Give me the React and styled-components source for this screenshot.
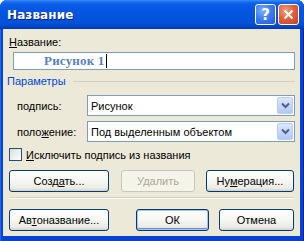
import React from 'react';
import styled, { createGlobalStyle } from 'styled-components';

const Global = createGlobalStyle`
  html, body { margin: 0; padding: 0; background: #fff; }
  body { font-family: "Liberation Sans", Arial, sans-serif; font-size: 11px; color: #000; }
`;

const Chevron = () => (
  <svg width="9" height="7" viewBox="0 0 9 7">
    <polyline points="1,1.5 4.5,5 8,1.5" fill="none" stroke="#4D6185" strokeWidth="2" />
  </svg>
);

const App = () => {
  return (
    <>
      <Global />
      <Window>
        <TitleBar>
          <Title>Название</Title>
          <TitleButtons>
            <CapButton $kind="help">?</CapButton>
            <CapButton $kind="close">
              <svg width="11" height="11" viewBox="0 0 11 11">
                <path d="M1.5 1.5 L9.5 9.5 M9.5 1.5 L1.5 9.5" stroke="#fff" strokeWidth="2" />
              </svg>
            </CapButton>
          </TitleButtons>
        </TitleBar>
        <Body>
          <Label><u>Н</u>азвание:</Label>
          <Input>
            <InputText>Рисунок 1</InputText>
            <Caret />
          </Input>

          <GroupHead>
            <GroupTitle>Параметры</GroupTitle>
            <GroupLine />
          </GroupHead>

          <FieldRow $top={8}>
            <FieldLabel>по<u>д</u>пись:</FieldLabel>
            <Combo>
              <ComboText>Рисунок</ComboText>
              <ComboButton><Chevron /></ComboButton>
            </Combo>
          </FieldRow>
          <FieldRow $top={5}>
            <FieldLabel>поло<u>ж</u>ение:</FieldLabel>
            <Combo>
              <ComboText>Под выделенным объектом</ComboText>
              <ComboButton><Chevron /></ComboButton>
            </Combo>
          </FieldRow>

          <CheckRow>
            <CheckBox />
            <span><u>И</u>сключить подпись из названия</span>
          </CheckRow>

          <ButtonRow $top={9}>
            <Button $w={100}>Созд<u>а</u>ть...</Button>
            <Button $w={74} $ml={12} disabled>Удалить</Button>
            <Button $w={88} $ml={11}>Ну<u>м</u>ерация...</Button>
          </ButtonRow>

          <Separator />

          <ButtonRow $top={10}>
            <Button $w={100}>Ав<u>т</u>оназвание...</Button>
            <Button $w={73} $ml={27} $default>ОК</Button>
            <Button $w={75} $ml={10}>Отмена</Button>
          </ButtonRow>
        </Body>
      </Window>
    </>
  );
};

export default App;

const Window = styled.div`
  width: 304px;
  height: 241px;
  box-sizing: border-box;
  background: #0842d4;
  border-radius: 7px 7px 0 0;
  display: flex;
  flex-direction: column;
  overflow: hidden;
  padding: 0 4px 5px 3px;
  box-shadow: inset 1px 0 0 #166aee, inset -1px 0 0 #001ea0;
`;

const TitleBar = styled.div`
  height: 29px;
  margin: 0 -4px 0 -3px;
  flex-shrink: 0;
  display: flex;
  align-items: center;
  justify-content: space-between;
  padding: 0 5px 0 7px;
  background: linear-gradient(
    to bottom,
    #3d8cf5 0px,
    #1a6df0 2px,
    #0a5ee6 4px,
    #0555e2 10px,
    #0453dc 18px,
    #0451d8 24px,
    #0343c4 27px,
    #0235b0 29px
  );
  border-radius: 7px 7px 0 0;
`;

const Title = styled.div`
  font-family: "DejaVu Sans", Verdana, sans-serif;
  font-weight: bold;
  font-size: 12px;
  color: #fff;
  text-shadow: 1px 1px 0 #0a1e80;
  letter-spacing: 0.1px;
`;

const TitleButtons = styled.div`
  display: flex;
  gap: 2px;
`;

const CapButton = styled.div`
  width: 21px;
  height: 21px;
  box-sizing: border-box;
  border: 1px solid #fff;
  border-radius: 3px;
  display: flex;
  align-items: center;
  justify-content: center;
  color: #fff;
  font-family: "DejaVu Sans", sans-serif;
  font-weight: bold;
  font-size: 15px;
  background: ${p =>
    p.$kind === 'close'
      ? 'radial-gradient(circle at 35% 30%, #f0a080 0%, #e2603c 45%, #c8401e 100%)'
      : 'radial-gradient(circle at 35% 30%, #7fb0ff 0%, #3d7ef2 45%, #2258d8 100%)'};
`;

const Body = styled.div`
  flex: 1;
  background: #ece9d8;
  padding: 0;
`;

const Label = styled.div`
  margin: 7px 0 0 6px;
  height: 13px;
  line-height: 13px;
`;

const Input = styled.div`
  margin: 3px 0 0 10px;
  width: 282px;
  height: 18px;
  box-sizing: border-box;
  border: 1px solid #7f9db9;
  background: #fff;
  display: flex;
  align-items: center;
  padding-left: 30px;
`;

const InputText = styled.span`
  font-family: "Liberation Serif", "Times New Roman", serif;
  font-weight: bold;
  font-size: 13px;
  color: #5b7fc4;
  letter-spacing: 0.2px;
`;

const Caret = styled.span`
  width: 1px;
  height: 14px;
  background: #000;
  margin-left: 1px;
`;

const GroupHead = styled.div`
  margin: 4px 0 0 4px;
  height: 13px;
  display: flex;
  align-items: center;
`;

const GroupTitle = styled.span`
  color: #0046d5;
  font-size: 11px;
`;

const GroupLine = styled.div`
  flex: 1;
  height: 1px;
  background: #d0d0bf;
  margin: 2px 5px 0 7px;
`;

const FieldRow = styled.div`
  margin: ${p => p.$top}px 0 0 14px;
  display: flex;
  align-items: center;
`;

const FieldLabel = styled.span`
  width: 70px;
`;

const Combo = styled.div`
  width: 208px;
  height: 21px;
  box-sizing: border-box;
  border: 1px solid #7f9db9;
  background: #fff;
  display: flex;
  align-items: center;
  padding: 1px;
`;

const ComboText = styled.span`
  flex: 1;
  padding-left: 2px;
`;

const ComboButton = styled.div`
  width: 16px;
  height: 17px;
  box-sizing: border-box;
  border: 1px solid #bccdf5;
  border-radius: 2px;
  background: linear-gradient(to bottom, #dce6fd, #c2d3fc 60%, #b3c8f6);
  display: flex;
  align-items: center;
  justify-content: center;
`;

const CheckRow = styled.div`
  margin: 6px 0 0 6px;
  display: flex;
  align-items: center;
  gap: 4px;
  height: 13px;
`;

const CheckBox = styled.div`
  width: 13px;
  height: 13px;
  box-sizing: border-box;
  border: 1px solid #1c5180;
  background: linear-gradient(135deg, #dcdcd7, #fff);
`;

const ButtonRow = styled.div`
  margin: ${p => p.$top}px 0 0 6px;
  display: flex;
`;

const Button = styled.button`
  width: ${p => p.$w}px;
  margin-left: ${p => p.$ml || 0}px;
  height: 22px;
  box-sizing: border-box;
  padding: 0;
  font: inherit;
  color: #000;
  border: 1px solid #003c74;
  border-radius: 3px;
  background: linear-gradient(to bottom, #fff 0%, #f6f6f2 50%, #ecebe6 85%, #d6d0c5 100%);
  box-shadow: ${p => (p.$default ? 'inset 0 0 0 1px #a7c1f0, inset 0 -1px 0 1px #6a8fdc' : 'none')};

  &:disabled {
    color: #aca899;
    border-color: #c9c7ba;
    background: #f5f4ea;
  }
`;

const Separator = styled.div`
  margin: 5px 6px 0 6px;
  height: 1px;
  background: #d0d0bf;
  border-bottom: 1px solid #fff;
`;
